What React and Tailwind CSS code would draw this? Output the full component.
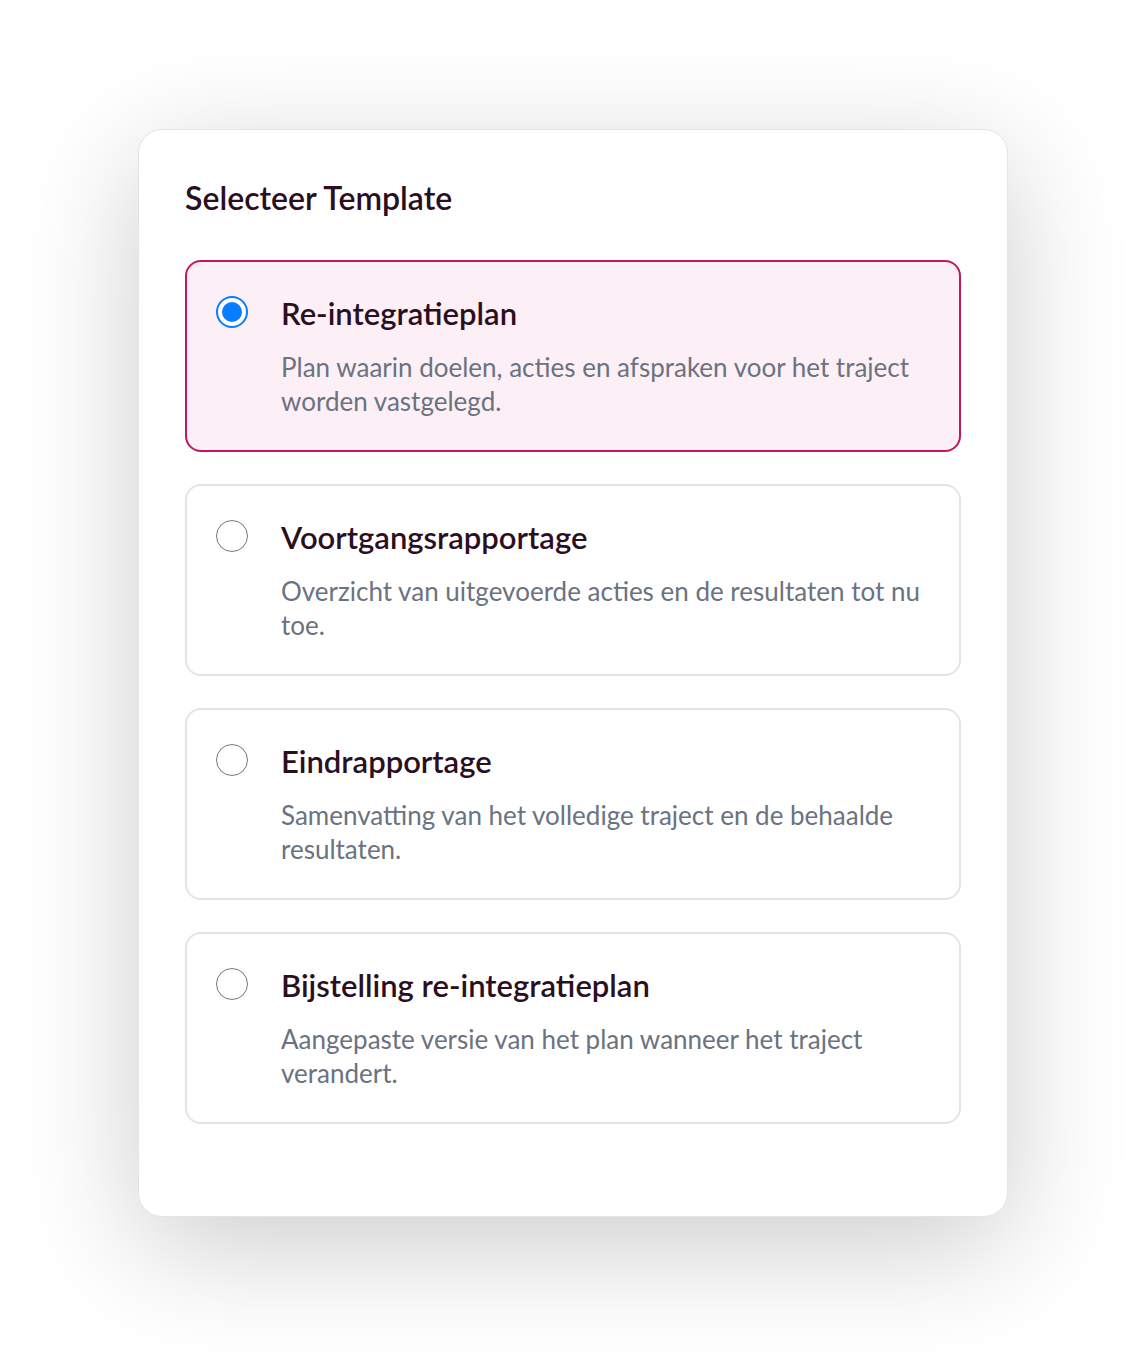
import React, { useState } from 'react';

const templates = [
  {
    id: 'reintegratie',
    title: 'Re-integratieplan',
    description: 'Plan waarin doelen, acties en afspraken voor het traject worden vastgelegd.',
  },
  {
    id: 'voortgang',
    title: 'Voortgangsrapportage',
    description: 'Overzicht van uitgevoerde acties en de resultaten tot nu toe.',
  },
  {
    id: 'eind',
    title: 'Eindrapportage',
    description: 'Samenvatting van het volledige traject en de behaalde resultaten.',
  },
  {
    id: 'bijstelling',
    title: 'Bijstelling re-integratieplan',
    description: 'Aangepaste versie van het plan wanneer het traject verandert.',
  },
];

const Radio = ({ checked }) =>
  checked ? (
    <span className="mt-[2px] flex h-8 w-8 shrink-0 items-center justify-center rounded-full border-2 border-[#0a7cff] bg-white">
      <span className="h-5 w-5 rounded-full bg-[#0a7cff]" />
    </span>
  ) : (
    <span className="mt-[2px] h-8 w-8 shrink-0 rounded-full border-[1.5px] border-[#777777] bg-white" />
  );

export default function App() {
  const [selected, setSelected] = useState('reintegratie');

  return (
    <div
      className="min-h-screen bg-white pt-[129px]"
      style={{ fontFamily: 'Lato, "Noto Sans", sans-serif' }}
    >
      <div className="mx-auto w-[870px] rounded-[24px] border border-[#e4e4e7] bg-white px-[46px] pt-12 pb-[92px] shadow-[0_30px_120px_rgba(0,0,0,0.2)]">
        <h2 className="mb-[42px] text-[32px] leading-10 font-semibold text-[#2b0f1f]">Selecteer Template</h2>

        <div className="flex flex-col gap-[32px]">
          {templates.map((t) => {
            const isActive = selected === t.id;
            return (
              <button
                key={t.id}
                type="button"
                onClick={() => setSelected(t.id)}
                className={`flex items-start gap-[33px] rounded-[16px] border-2 pt-[32px] pr-[30px] pb-[32px] pl-[29px] text-left ${
                  isActive ? 'border-[#c2185b] bg-[#fcf0f6]' : 'border-[#e4e4e7] bg-white'
                }`}
              >
                <Radio checked={isActive} />
                <div className="flex-1">
                  <div className="text-[31px] leading-[38px] font-semibold text-[#2b0f1f]">{t.title}</div>
                  <p className="mt-[18px] text-[26px] leading-[34px] text-[#6b7280]">{t.description}</p>
                </div>
              </button>
            );
          })}
        </div>
      </div>
    </div>
  );
}
